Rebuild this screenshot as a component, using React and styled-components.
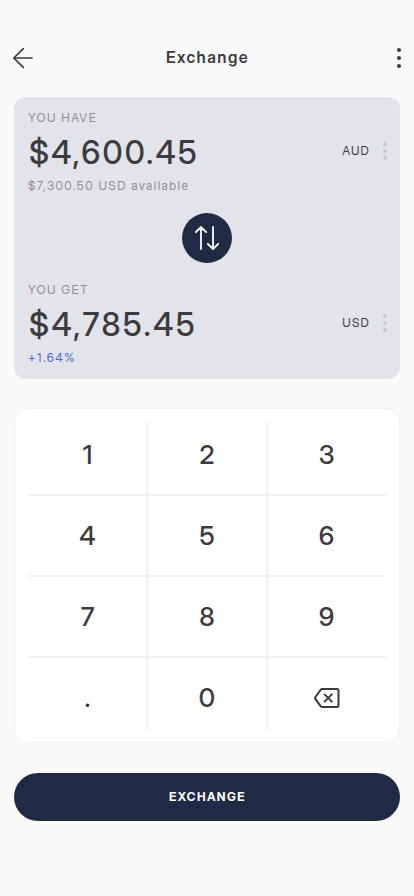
import React from "react";
import styled, { createGlobalStyle } from "styled-components";

const Global = createGlobalStyle`
  * { box-sizing: border-box; }
  body { margin: 0; background: #fafafa; font-family: "Inter Display", Inter, "Liberation Sans", sans-serif; color: #3b3b40; }
  button { font: inherit; color: inherit; border: 0; padding: 0; background: none; }
`;

const Screen = styled.main`
  width: 414px;
  height: 896px;
  padding: 38px 14px 0;
  background: #fafafa;
  display: flex;
  flex-direction: column;
`;

const Header = styled.header`
  height: 40px;
  margin: 0 -4px 19px -3px;
  display: grid;
  grid-template-columns: 24px 1fr 10px;
  align-items: center;
`;

const Title = styled.h1`
  margin: 0 0 2px;
  padding-right: 14px;
  text-align: center;
  font-size: 16px;
  line-height: 20px;
  font-weight: 600;
  letter-spacing: 1.45px;
`;

const IconButton = styled.button`
  display: flex;
  align-items: center;
  justify-content: center;
`;

const Panel = styled.section`
  height: 282px;
  padding: 13px 12px 0 14px;
  border-radius: 12px;
  background: #e3e4ea;
`;

const Account = styled.div`
  height: 84px;
`;

const Caption = styled.div`
  font-size: 12px;
  line-height: 16px;
  letter-spacing: ${(p) => p.$spacing || "1.45px"};
  color: ${(p) => p.$color || "#8d8e93"};
`;

const AmountRow = styled.div`
  height: 52px;
  display: flex;
  align-items: center;
  justify-content: space-between;
`;

const Amount = styled.div`
  padding: 2px 0 0 1px;
  font-size: 32px;
  line-height: 40px;
  font-weight: 500;
  letter-spacing: ${(p) => p.$spacing};
`;

const Currency = styled.button`
  display: flex;
  align-items: center;
  gap: 12px;
  font-size: 12px;
  line-height: 16px;
  letter-spacing: 1.2px;
  padding-bottom: 2px;
`;

const SwapRow = styled.div`
  height: 88px;
  padding-top: 19px;
  display: flex;
  justify-content: center;
  margin-right: 2px;
`;

const SwapButton = styled.button`
  width: 50px;
  height: 50px;
  border-radius: 50%;
  background: #212a44;
  display: flex;
  align-items: center;
  justify-content: center;
`;

const Keypad = styled.section`
  height: 335px;
  margin-top: 29px;
  padding: 6px 14px 0;
  border: 1px solid #f1f1f5;
  border-radius: 13px;
  background: #fff;
`;

const Keys = styled.div`
  display: grid;
  grid-template-columns: 119px 120px 119px;
  grid-auto-rows: 81px;
  margin: 0 -1px;
  background-image: linear-gradient(#f1f1f3, #f1f1f3), linear-gradient(#f1f1f3, #f1f1f3);
  background-size: 2px 308px;
  background-position: 118px 7px, 238px 7px;
  background-repeat: no-repeat;
`;

const Key = styled.button`
  border-bottom: 2px solid ${(p) => (p.$last ? "transparent" : "#f1f1f3")};
  display: flex;
  align-items: center;
  justify-content: center;
  font-size: 26px;
  font-weight: 500;
`;

const Submit = styled.button`
  height: 48px;
  margin-top: 30px;
  padding-bottom: 1px;
  border-radius: 24px;
  background: #212a44;
  color: #fff;
  font-size: 12px;
  font-weight: 700;
  letter-spacing: 1.4px;
  text-indent: 1px;
`;

const BackIcon = () => (
  <svg width="24" height="24" viewBox="0 0 24 24" fill="none" stroke="#3b3b40" strokeWidth="1.7" strokeLinecap="round" strokeLinejoin="round">
    <path d="M21 12H2.8M12.3 2.7L2.8 12l9.5 9.3" />
  </svg>
);

const Dots = ({ color, gap, height }) => (
  <svg width="6" height={height} viewBox={`0 0 6 ${height}`} fill={color}>
    <circle cx="3" cy={height / 2 - gap} r="2.05" />
    <circle cx="3" cy={height / 2} r="2.05" />
    <circle cx="3" cy={height / 2 + gap} r="2.05" />
  </svg>
);

const SwapIcon = () => (
  <svg width="26" height="26" viewBox="0 0 26 26" fill="none" stroke="#fff" strokeWidth="1.8" strokeLinecap="round" strokeLinejoin="round">
    <path d="M7 24V2M1.8 7.2L7 2l5.2 5.2M19 2v22M13.8 18.8L19 24l5.2-5.2" />
  </svg>
);

const DeleteIcon = () => (
  <svg width="26" height="20" viewBox="0 0 26 20" fill="none" stroke="#3b3b40" strokeWidth="2" strokeLinecap="round" strokeLinejoin="round">
    <path d="M8 1h15a1.5 1.5 0 0 1 1.5 1.5v15a1.5 1.5 0 0 1-1.5 1.5H8a1.5 1.5 0 0 1-1.2-.6L1.3 10.8a1.4 1.4 0 0 1 0-1.6l5.5-7.6A1.5 1.5 0 0 1 8 1z" />
    <path d="M10.1 5.9l8.2 8.2M18.3 5.9l-8.2 8.2" strokeLinecap="butt" />
  </svg>
);

function AccountBlock({ label, amount, amountSpacing, currency, note, noteColor, noteSpacing }) {
  return (
    <Account>
      <Caption>{label}</Caption>
      <AmountRow>
        <Amount $spacing={amountSpacing}>{amount}</Amount>
        <Currency>
          {currency}
          <Dots color="#c8c9d1" gap={7} height={20} />
        </Currency>
      </AmountRow>
      <Caption $color={noteColor} $spacing={noteSpacing}>{note}</Caption>
    </Account>
  );
}

const keys = ["1", "2", "3", "4", "5", "6", "7", "8", "9", ".", "0", "delete"];

export default function App() {
  return (
    <Screen>
      <Global />
      <Header>
        <IconButton aria-label="Back"><BackIcon /></IconButton>
        <Title>Exchange</Title>
        <IconButton aria-label="More"><Dots color="#3b3b40" gap={8} height={24} /></IconButton>
      </Header>
      <Panel>
        <AccountBlock label="YOU HAVE" amount="$4,600.45" amountSpacing="2.2px" currency="AUD" note="$7,300.50 USD available" />
        <SwapRow>
          <SwapButton aria-label="Swap"><SwapIcon /></SwapButton>
        </SwapRow>
        <AccountBlock label="YOU GET" amount="$4,785.45" amountSpacing="2.55px" currency="USD" note="+1.64%" noteColor="#4a6bd0" noteSpacing="1.5px" />
      </Panel>
      <Keypad>
        <Keys>
          {keys.map((k, i) => (
            <Key key={k} $last={i > 8} aria-label={k}>
              {k === "delete" ? <DeleteIcon /> : k}
            </Key>
          ))}
        </Keys>
      </Keypad>
      <Submit>EXCHANGE</Submit>
    </Screen>
  );
}
